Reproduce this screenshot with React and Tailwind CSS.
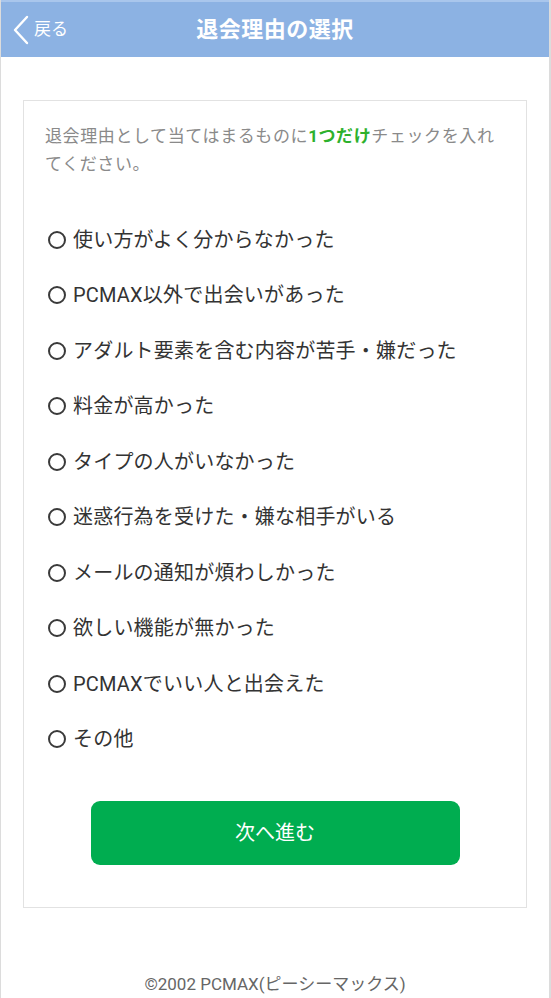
const REASONS = [
  '使い方がよく分からなかった',
  'PCMAX以外で出会いがあった',
  'アダルト要素を含む内容が苦手・嫌だった',
  '料金が高かった',
  'タイプの人がいなかった',
  '迷惑行為を受けた・嫌な相手がいる',
  'メールの通知が煩わしかった',
  '欲しい機能が無かった',
  'PCMAXでいい人と出会えた',
  'その他',
]

function Radio() {
  return (
    <span className="inline-block h-[18px] w-[18px] shrink-0 rounded-full border-2 border-[#3a3a3a]" />
  )
}

export default function App() {
  return (
    <div
      className="flex h-[998px] flex-col overflow-hidden border-l border-r-2 border-[#dcdcdc] bg-white"
      style={{ fontFamily: 'Roboto, "Noto Sans CJK JP", sans-serif' }}
    >
      <header className="relative flex h-[57px] shrink-0 items-center justify-center border-t-2 border-[#a9c6ec] bg-[#8cb2e3]">
        <a className="absolute left-[11px] top-0 flex h-full items-center gap-[4px] text-white">
          <svg width="18" height="30" viewBox="0 0 18 30" fill="none">
            <path d="M15 2 L3 15 L15 28" stroke="white" strokeWidth="2.4" strokeLinecap="round" strokeLinejoin="round" />
          </svg>
          <span className="text-[17px] leading-none">戻る</span>
        </a>
        <h1 className="text-[22px] font-bold tracking-[0.5px] text-white">退会理由の選択</h1>
      </header>

      <main className="flex flex-1 flex-col px-[22px] pt-[43px]">
        <section className="border border-[#e2e2e2] px-[21px] pb-[42px] pt-[21px]">
          <p className="text-[17px] leading-[28px] tracking-[0.6px] text-[#8a8a8a]">
            退会理由として当てはまるものに<span className="font-bold text-[#2db12d]">1つだけ</span>チェックを入れてください。
          </p>
          <ul className="mt-[34px]">
            {REASONS.map((r) => (
              <li key={r} className="flex h-[55.5px] items-center gap-[7px] pl-[3px]">
                <Radio />
                <span className="text-[20px] tracking-[0.2px] text-[#333]">{r}</span>
              </li>
            ))}
          </ul>
          <button className="mx-auto mt-[34px] flex h-[64px] w-[369px] items-center justify-center rounded-[9px] bg-[#00ad50] text-[20px] text-white">
            次へ進む
          </button>
        </section>

        <footer className="mt-auto pb-[2px] text-center text-[17px] leading-[24px] text-[#666]">
          ©2002 PCMAX(ピーシーマックス)
        </footer>
      </main>
    </div>
  )
}
